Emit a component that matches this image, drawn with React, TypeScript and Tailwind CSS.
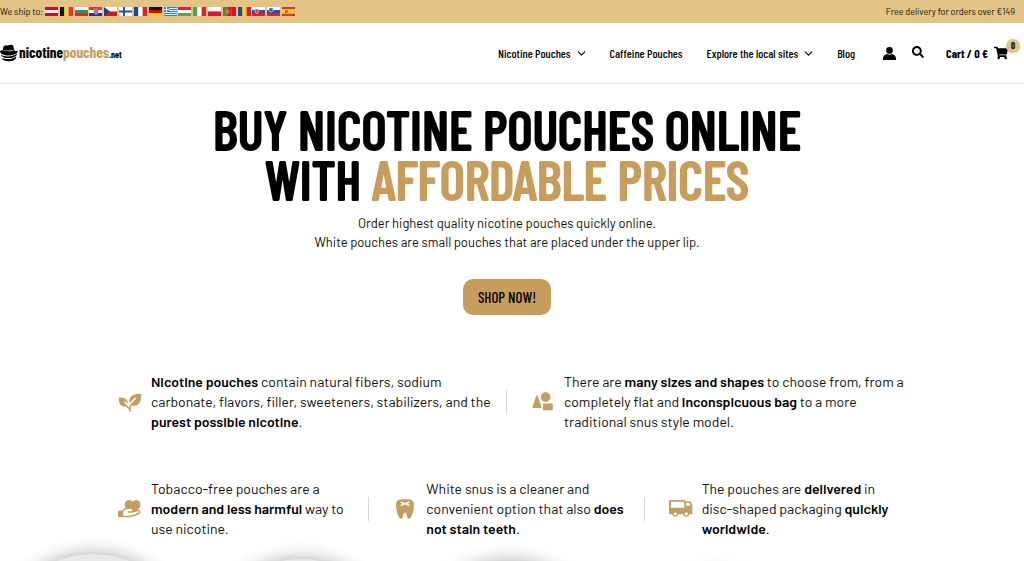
import type { ReactNode } from 'react'
import { FaSearch, FaShoppingCart } from 'react-icons/fa'
import { PiHandHeartFill, PiPlantFill, PiShapesFill, PiToothFill } from 'react-icons/pi'
import { ChevronDown } from 'lucide-react'
import { clsx } from 'clsx'

const CONDENSED = "font-['Barlow_Condensed','Roboto_Condensed','Liberation_Sans_Narrow','Roboto',sans-serif]"

type Flag = { country: string; dir: 'h' | 'v'; colors: string[]; extra?: ReactNode }

const FLAGS: Flag[] = [
  { country: 'Austria', dir: 'h', colors: ['#e4002b', '#fff', '#e4002b'] },
  { country: 'Belgium', dir: 'v', colors: ['#111', '#f9d33c', '#e8343c'] },
  { country: 'Bulgaria', dir: 'h', colors: ['#fff', '#159d6d', '#e02b20'] },
  {
    country: 'Croatia', dir: 'h', colors: ['#f03030', '#fff', '#2432a0'],
    extra: <path d="M5 2h4v4l-2 2-2-2z" fill="#e0607a" stroke="#7aa0d8" strokeWidth=".6" />,
  },
  {
    country: 'Czech Republic', dir: 'h', colors: ['#fff', '#d7141a'],
    extra: <path d="M0 0l6 4.5L0 9z" fill="#11457e" />,
  },
  {
    country: 'Finland', dir: 'h', colors: ['#fff'],
    extra: <path d="M4 0h2v3.5h7v2H6V9H4V5.5H0v-2h4z" fill="#2452a8" />,
  },
  { country: 'France', dir: 'v', colors: ['#1745a8', '#fff', '#e8202c'] },
  { country: 'Germany', dir: 'h', colors: ['#111', '#d00', '#ffce00'] },
  {
    country: 'Greece', dir: 'h',
    colors: ['#3181cc', '#dcecfa', '#3181cc', '#dcecfa', '#3181cc', '#dcecfa', '#3181cc', '#dcecfa', '#3181cc'],
    extra: (
      <>
        <path d="M0 0h5v5H0z" fill="#3181cc" />
        <path d="M2 0h1v5H2zM0 2h5v1H0z" fill="#fff" />
      </>
    ),
  },
  { country: 'Hungary', dir: 'h', colors: ['#ce2939', '#fff', '#5da25a'] },
  { country: 'Italy', dir: 'v', colors: ['#4da746', '#fff', '#e02030'] },
  { country: 'Poland', dir: 'h', colors: ['#fff', '#dc143c'] },
  {
    country: 'Portugal', dir: 'v', colors: ['#47922f', '#dd1029', '#dd1029'],
    extra: <circle cx="4.5" cy="4.5" r="1.6" fill="#d85030" stroke="#e8c020" strokeWidth=".7" />,
  },
  { country: 'Romania', dir: 'v', colors: ['#1550a4', '#fcd116', '#ce2130'] },
  {
    country: 'Slovakia', dir: 'h', colors: ['#fff', '#1a55b0', '#e42030'],
    extra: <path d="M3 2h4v3L5 7 3 5z" fill="#e04058" stroke="#fff" strokeWidth=".5" />,
  },
  {
    country: 'Slovenia', dir: 'h', colors: ['#fff', '#1258c0', '#e42030'],
    extra: <path d="M2 1h4v3L4 5 2 4z" fill="#2860b0" stroke="#fff" strokeWidth=".5" />,
  },
  {
    country: 'Spain', dir: 'h', colors: ['#d23b30', '#fcc433', '#fcc433', '#d23b30'],
    extra: <path d="M3 3h3v3H3z" fill="#c8702c" />,
  },
]

function FlagIcon({ flag }: { flag: Flag }) {
  const n = flag.colors.length
  return (
    <svg viewBox="0 0 13 9" className="h-[9px] w-[13px]" role="img" aria-label={flag.country}>
      {flag.colors.map((c, i) =>
        flag.dir === 'h' ? (
          <rect key={i} x="0" y={(9 / n) * i} width="13" height={9 / n} fill={c} />
        ) : (
          <rect key={i} x={(13 / n) * i} y="0" width={13 / n} height="9" fill={c} />
        )
      )}
      {flag.extra}
    </svg>
  )
}

function HatIcon() {
  return (
    <svg viewBox="0 0 18 18" className="h-[18px] w-[18px]" aria-hidden="true">
      <path d="M3.500 2.500C4.500.8 6.400 1.800 8.500 1.300 10.500.8 12.400.4 13.200 1.800l1 3.800C11 7 6.500 7.100 2.800 6z" />
      <path d="M2.600 6.300c4.200 1.400 8.400 1.100 11.900-.4l.3 1.200c1.500-.1 2.500-.8 2.800-.2.400 2.200-4 4.500-9 4.500C4 11.400 0 9.800.1 7.200c.3-.8 1.300-.7 2.500-.9z" />
      <path d="M.8 11c4.800 2.200 11.600 1.900 16-1.200.5 2.400-3.200 4.300-7.800 4.300-4 0-7.500-1.100-8.200-3.100z" />
      <path d="M1.600 14c4.300 1.600 10.400 1.300 14.600-1.300.2 2.600-2.700 4.600-6.800 4.600-3.800 0-7-1.300-7.800-3.300z" />
    </svg>
  )
}

function VanIcon() {
  return (
    <svg viewBox="0 0 24 24" className="h-6 w-6" aria-hidden="true">
      <path
        fill="currentColor"
        fillRule="evenodd"
        d="M1.500 3H15c.8 0 1.400.5 1.500 1.300h3.700c1.100 0 1.900.6 2.300 1.600l.8 2.600V16c0 .8-.5 1.300-1.300 1.300H1.500C.7 17.300 0 16.800 0 16V4.400C0 3.600.7 3 1.500 3zM2 4.700v6h13.200v-6zm15.200 1.100v3h4.200l-.7-2.200c-.2-.5-.6-.8-1.100-.8z"
      />
      <circle cx="6.300" cy="16.800" r="2.300" fill="#fff" stroke="currentColor" strokeWidth="1.300" />
      <circle cx="17.200" cy="16.800" r="2.300" fill="#fff" stroke="currentColor" strokeWidth="1.300" />
    </svg>
  )
}

function NavLink({ label, menu }: { label: string; menu?: boolean }) {
  return (
    <a href="#" className="flex items-center gap-1 whitespace-nowrap">
      {label}
      {menu && <ChevronDown className="-mr-[2px] h-[13px] w-[13px]" strokeWidth={2} />}
    </a>
  )
}

function Feature({ icon, children, divider }: { icon: ReactNode; children: ReactNode; divider?: boolean }) {
  return (
    <div className="flex items-center pl-6">
      <span className="w-[33px] shrink-0 text-2xl text-[#c19f62]">{icon}</span>
      <p className="grow whitespace-nowrap">{children}</p>
      {divider && <span className="h-6 w-px shrink-0 bg-gray-300" />}
    </div>
  )
}

const TINS = ['mt-[15px]', 'mt-[20px]', 'mt-[22px]', 'mt-[36px]']

export default function App() {
  return (
    <div className="overflow-hidden bg-white font-['Barlow','Roboto',sans-serif] text-[#111]">
      {/* Shipping bar */}
      <div className="flex h-[23px] items-center justify-between bg-[#e3c487] pr-[9px] text-[9px]">
        <div className="flex items-center">
          <span className="w-[45px] whitespace-nowrap">We ship to:</span>
          <div className="flex w-[250px] justify-between">
            {FLAGS.map((flag) => (
              <FlagIcon key={flag.country} flag={flag} />
            ))}
          </div>
        </div>
        <span>Free delivery for orders over €149</span>
      </div>

      {/* Header */}
      <header className="flex h-[61px] items-center justify-between border-b border-gray-200 pr-1">
        <a href="#" className="flex items-center gap-px">
          <HatIcon />
          <span className={clsx('text-[15px] leading-5 font-bold text-black', CONDENSED)}>
            nicotine<span className="text-[#c89d5c]">pouches</span>
            <span className="text-[9px]">.net</span>
          </span>
        </a>
        <nav className={clsx('flex items-center text-xs font-medium text-black', CONDENSED)}>
          <div className="flex gap-6">
            <NavLink label="Nicotine Pouches" menu />
            <NavLink label="Caffeine Pouches" />
            <NavLink label="Explore the local sites" menu />
            <NavLink label="Blog" />
          </div>
          <a href="#" aria-label="Account" className="ml-7">
            <svg viewBox="0 0 13 13" className="h-[13px] w-[13px]" fill="currentColor">
              <circle cx="6.500" cy="3.400" r="3.400" />
              <path d="M0 13v-1.500C0 8.500 2.500 7.400 4 6.900c1.600 1 3.400 1 5 0 1.500.5 4 1.600 4 4.600V13z" />
            </svg>
          </a>
          <button aria-label="Search" className="ml-4 pb-[3px] text-xs">
            <FaSearch />
          </button>
          <a href="#" className="relative ml-[22px] flex items-center gap-[6px] pr-3 whitespace-nowrap">
            <span className="font-bold">Cart / 0 €</span>
            <FaShoppingCart className="text-sm" />
            <span className="absolute -top-[6px] right-0 flex h-[14px] w-[14px] items-center justify-center rounded-full bg-[#e3c487] text-[9px] font-bold shadow-sm">
              0
            </span>
          </a>
        </nav>
      </header>

      <main className="pr-[10px]">
        {/* Hero */}
        <section className="flex flex-col items-center pt-5 text-center">
          <h1 className={clsx('text-[54px] leading-[50px] font-medium text-black [-webkit-text-stroke:2px_currentColor]', CONDENSED)}>
            BUY NICOTINE POUCHES ONLINE
            <br />
            WITH <span className="text-[#c89d5c]">AFFORDABLE PRICES</span>
          </h1>
          <p className="mt-[10px] text-[13px] leading-[19px]">
            Order highest quality nicotine pouches quickly online.
            <br />
            White pouches are small pouches that are placed under the upper lip.
          </p>
          <button className={clsx('mt-[27px] h-9 w-[88px] rounded-[10px] bg-[#c89d5c] text-[15px] font-medium text-black', CONDENSED)}>
            SHOP NOW!
          </button>
        </section>

        {/* Features */}
        <section className="mx-auto mt-[57px] max-w-[826px] text-sm leading-5 [&_strong]:font-semibold [&_strong]:text-black">
          <div className="grid grid-cols-2">
            <Feature icon={<PiPlantFill />} divider>
              <strong>Nicotine pouches</strong> contain natural fibers, sodium
              <br />
              carbonate, flavors, filler, sweeteners, stabilizers, and the
              <br />
              <strong>purest possible nicotine</strong>.
            </Feature>
            <Feature icon={<PiShapesFill />}>
              There are <strong>many sizes and shapes</strong> to choose from, from a
              <br />
              completely flat and <strong>inconspicuous bag</strong> to a more
              <br />
              traditional snus style model.
            </Feature>
          </div>
          <div className="mt-[47px] grid grid-cols-3">
            <Feature icon={<PiHandHeartFill />} divider>
              Tobacco-free pouches are a
              <br />
              <strong>modern and less harmful</strong> way to
              <br />
              use nicotine.
            </Feature>
            <Feature icon={<PiToothFill />} divider>
              White snus is a cleaner and
              <br />
              convenient option that also <strong>does</strong>
              <br />
              <strong>not stain teeth</strong>.
            </Feature>
            <Feature icon={<VanIcon />}>
              The pouches are <strong>delivered</strong> in
              <br />
              disc-shaped packaging <strong>quickly</strong>
              <br />
              <strong>worldwide</strong>.
            </Feature>
          </div>
        </section>

        {/* Product tins */}
        <section className="-ml-[7px] flex h-[22px] gap-2 overflow-hidden">
          {TINS.map((offset) => (
            <div key={offset} className={clsx('h-[200px] w-[200px] shrink-0 rounded-full bg-[#e9e9e9] shadow-[0_0_18px_0_#aaa]', offset)} />
          ))}
        </section>
      </main>
    </div>
  )
}
